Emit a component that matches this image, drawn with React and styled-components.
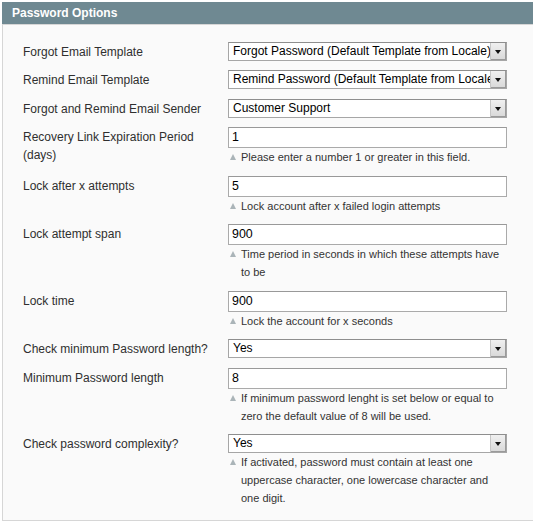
import React from "react";
import styled, { createGlobalStyle } from "styled-components";

const Global = createGlobalStyle`
  html, body { margin: 0; padding: 0; overflow: hidden; background: #fff; }
  body { font-family: "Liberation Sans", Arial, sans-serif; font-size: 12px; color: #2f2f2f; }
`;

const Panel = styled.div`
  margin: 2px 0 0 2px;
  width: 545px;
`;

const Head = styled.div`
  background: #6f8992;
  height: 22px;
  padding: 0 10px;
  display: flex;
  align-items: center;
  border-bottom: 1px solid #d6d6d6;
`;

const Title = styled.h4`
  margin: 0;
  color: #fff;
  font-size: 12px;
  font-weight: bold;
  line-height: 22px;
`;

const Fieldset = styled.div`
  background: #fafafa;
  border: 1px solid #d6d6d6;
  border-top: 0;
  height: 496px;
  box-sizing: border-box;
  padding: 11.5px 0 0 20px;
`;

const Row = styled.div`
  display: grid;
  grid-template-columns: 205px 279px;
  padding: 5px 0 4.5px;
  align-items: start;
`;

const Label = styled.div`
  line-height: 18px;
  padding-top: 1px;
  width: 185px;
  color: #2f2f2f;
`;

const SelectBox = styled.div`
  display: flex;
  height: 19px;
  box-sizing: border-box;
  border: 1px solid #a6a6a6;
  border-top-color: #8e8e8e;
  background: #fff;
`;

const SelectText = styled.div`
  flex: 1;
  overflow: hidden;
  white-space: nowrap;
  padding-left: 4px;
  line-height: 17px;
  font-size: 12px;
  color: #000;
`;

const Arrow = styled.div`
  width: 15px;
  flex: none;
  background: linear-gradient(#f0f0f0, #d8d8d8);
  border-left: 1px solid #c6c6c6;
  box-shadow: inset -1px -1px 0 #9a9a9a;
  display: flex;
  align-items: center;
  justify-content: center;
  &::after {
    content: "";
    border-left: 3.5px solid transparent;
    border-right: 3.5px solid transparent;
    border-top: 4px solid #111;
    margin-top: 1px;
    margin-right: 1px;
  }
`;

const Input = styled.div`
  height: 21px;
  box-sizing: border-box;
  border: 1px solid #aaa;
  border-top-color: #999;
  background: #fff;
  padding-left: 3px;
  line-height: 19px;
  font-size: 12.4px;
  color: #000;
`;

const Note = styled.div`
  position: relative;
  padding-left: 13px;
  font-size: 11px;
  line-height: 18px;
  color: #333;
  &::before {
    content: "";
    position: absolute;
    left: 2px;
    top: 6px;
    border-left: 3.5px solid transparent;
    border-right: 3.5px solid transparent;
    border-bottom: 6px solid #aab4b8;
  }
`;

const Select = ({ value }) => (
  <SelectBox>
    <SelectText>{value}</SelectText>
    <Arrow />
  </SelectBox>
);

const rows = [
  { label: "Forgot Email Template", type: "select", value: "Forgot Password (Default Template from Locale)" },
  { label: "Remind Email Template", type: "select", value: "Remind Password (Default Template from Locale)" },
  { label: "Forgot and Remind Email Sender", type: "select", value: "Customer Support" },
  { label: "Recovery Link Expiration Period (days)", type: "input", value: "1", note: "Please enter a number 1 or greater in this field." },
  { label: "Lock after x attempts", type: "input", value: "5", note: "Lock account after x failed login attempts" },
  { label: "Lock attempt span", type: "input", value: "900", note: "Time period in seconds in which these attempts have to be" },
  { label: "Lock time", type: "input", value: "900", note: "Lock the account for x seconds" },
  { label: "Check minimum Password length?", type: "select", value: "Yes" },
  { label: "Minimum Password length", type: "input", value: "8", note: "If minimum password lenght is set below or equal to zero the default value of 8 will be used." },
  { label: "Check password complexity?", type: "select", value: "Yes", note: "If activated, password must contain at least one uppercase character, one lowercase character and one digit." },
];

export default function App() {
  return (
    <>
      <Global />
      <Panel>
        <Head>
          <Title>Password Options</Title>
        </Head>
        <Fieldset>
          {rows.map((r) => (
            <Row key={r.label}>
              <Label>{r.label}</Label>
              <div>
                {r.type === "select" ? <Select value={r.value} /> : <Input>{r.value}</Input>}
                {r.note && <Note>{r.note}</Note>}
              </div>
            </Row>
          ))}
        </Fieldset>
      </Panel>
    </>
  );
}
